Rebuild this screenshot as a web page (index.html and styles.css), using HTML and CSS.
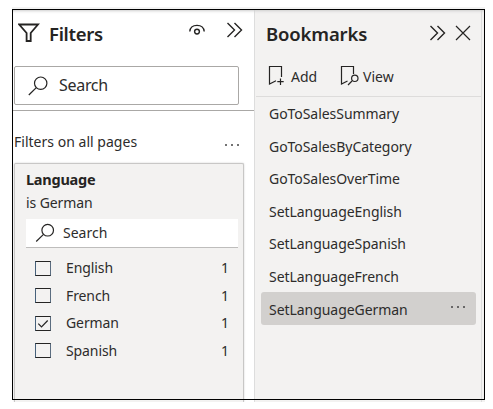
FILE: index.html
```html
<!DOCTYPE html>
<html lang="en">
<head>
<meta charset="utf-8">
<title>Filters and Bookmarks</title>
<link rel="stylesheet" href="styles.css">
</head>
<body>
<main class="window">
  <section class="filters">
    <header class="filters-head">
      <svg class="funnel" width="22" height="20" viewBox="0 0 22 20"><path d="M1.2 1.5H20L12.7 10v8H8.6v-8Z"/></svg>
      <h1>Filters</h1>
      <svg class="eye" width="16" height="12" viewBox="0 0 16 12"><path d="M.8 7.5C1.2 3.4 4 1.4 8 1.4s6.800 2 7.200 6.100"/><circle cx="8" cy="7.600" r="2.400"/></svg>
      <svg class="chev" width="17" height="16" viewBox="0 0 17 16"><path d="M1.500 1l7 7-7 7M8.500 1l7 7-7 7"/></svg>
    </header>
    <div class="search-main">
      <svg width="20" height="20" viewBox="0 0 20 20"><circle cx="12.700" cy="7.200" r="6.200"/><path d="M8.300 11.600L.8 19"/></svg>
      <span>Search</span>
    </div>
    <div class="group-head"><span>Filters on all pages</span><i class="dots"><b></b><b></b><b></b></i></div>
    <div class="card">
      <h2>Language</h2>
      <p>is German</p>
      <div class="search-card">
        <svg width="20" height="20" viewBox="0 0 20 20"><circle cx="12.700" cy="7.200" r="5.800"/><path d="M8.500 11.400L1.200 18.500"/></svg>
        <span>Search</span>
      </div>
      <ul class="values">
        <li><i class="box"></i><span>English</span><em>1</em></li>
        <li><i class="box"></i><span>French</span><em>1</em></li>
        <li><i class="box"><svg width="14" height="13" viewBox="0 0 14 13"><path d="M2.300 6.700l3.200 3.200 6.200-6.400"/></svg></i><span>German</span><em>1</em></li>
        <li><i class="box"></i><span>Spanish</span><em>1</em></li>
      </ul>
    </div>
  </section>
  <section class="bookmarks">
    <header class="marks-head">
      <h1>Bookmarks</h1>
      <svg class="chev" width="17" height="16" viewBox="0 0 17 16"><path d="M1.500 1l7 7-7 7M8.500 1l7 7-7 7"/></svg>
      <svg class="close" width="16" height="16" viewBox="0 0 16 16"><path d="M1 1l14 14M15 1L1 15"/></svg>
    </header>
    <div class="tools">
      <svg width="18" height="21" viewBox="0 0 18 21"><path d="M13.500 12V1.500h-12V19L8 15.700M12.500 13.500v6.500M9.300 16.700h6.400"/></svg>
      <span class="add">Add</span>
      <svg width="19" height="21" viewBox="0 0 19 21"><path d="M13.500 9V1.500h-12V19l6-3M8 20l4-4"/><circle cx="14.800" cy="13.300" r="3.200"/></svg>
      <span class="view">View</span>
    </div>
    <ul class="marks">
      <li><span>GoToSalesSummary</span></li>
      <li><span>GoToSalesByCategory</span></li>
      <li><span>GoToSalesOverTime</span></li>
      <li><span>SetLanguageEnglish</span></li>
      <li><span>SetLanguageSpanish</span></li>
      <li><span>SetLanguageFrench</span></li>
      <li class="selected"><span>SetLanguageGerman</span><i class="dots"><b></b><b></b><b></b></i></li>
    </ul>
  </section>
</main>
</body>
</html>
```
FILE: styles.css
```css
*, *::after { box-sizing: border-box; }
body { margin: 0; background: #fff; color: #2d2c2b; font: 14px/20px "Noto Sans", "Open Sans", sans-serif; overflow: hidden; }
h1, h2, p, ul { margin: 0; padding: 0; }
ul { list-style: none; }
i, em { font-style: normal; }
svg { fill: none; stroke: #252423; stroke-width: 1.2; flex: none; display: block; }
span { white-space: nowrap; }

.window { position: relative; display: flex; width: 473px; height: 395px; margin: 7px 0 0 12px; border-top: 2px solid #f3f3f3; }
.window::after { content: ""; position: absolute; left: 0; top: 0; width: 473px; height: 391px; border: 1px solid #000; box-shadow: inset 0 3px 3px -2px #ccc; }

.filters { display: flex; flex-direction: column; width: 242px; height: 393px; }
.filters-head { display: flex; height: 57px; padding: 14px 0 0 6px; }
h1 { color: #252423; font-size: 18.5px; line-height: 24px; font-weight: 600; }
.filters-head h1 { width: 139px; margin: -1px 0 0 9px; letter-spacing: -.3px; }
.funnel { stroke-width: 1.8; }
.eye { margin: 1px 21px 0 1px; stroke-width: 1.4; }
.chev { stroke-width: 1.4; }
.filters-head .chev { margin-top: -1px; }
.search-main { display: flex; width: 225px; height: 39px; margin-left: 2px; padding: 9px 13px; border: 1px solid #aaa8a6; border-radius: 2px; font-size: 16px; line-height: 19px; }
.search-main span { margin-left: 11px; letter-spacing: -.3px; }
.group-head { display: flex; justify-content: space-between; align-items: center; height: 53px; margin: 5px 0 0 1px; padding: 10px 5px 0 1px; border-top: 1px solid #aaa8a6; }
.group-head span { letter-spacing: .02px; }
.dots { display: flex; gap: 4px; width: 16px; height: 2px; }
.dots b { width: 2px; height: 2px; background: #444; border-radius: 1px; }
.group-head .dots { margin: 5px 8px 0 0; }
.card { flex: 1; width: 230px; margin-left: 2px; padding: 5px 5px 0 10px; background: #f3f2f1; border: 1px solid #c8c7c6; border-bottom: 0; border-radius: 2px 2px 0 0; box-shadow: 0 0 2px #ccc; }
.card h2 { height: 24px; padding-left: 1px; font-size: 14.5px; line-height: 20px; letter-spacing: -.25px; color: #252423; }
.card p { height: 26px; padding-left: 1px; letter-spacing: -.1px; }
.search-card { display: flex; width: 212px; height: 29px; margin-left: 1px; padding: 4px 9px; background: #fff; border-bottom: 1px solid #bebdbc; }
.search-card span { margin-left: 8px; }
.values { padding-top: 6px; }
.values li { display: flex; align-items: center; height: 27.5px; padding: 1px 0 0 10px; }
.box { width: 16px; height: 15px; border: 1px solid #252423; border-left-color: #46617b; border-right-color: #5b6d80; }
.values span { width: 155px; margin-left: 15px; letter-spacing: -.1px; }

.bookmarks { width: 231px; height: 393px; background: linear-gradient(to right, #ddd 1px, transparent 1px 227px, #ddd 227px 228px, transparent 228px), #f3f2f1; }
.marks-head { display: flex; height: 47px; padding: 13px 0 0 12px; }
.marks-head h1 { width: 163px; letter-spacing: -.15px; }
.marks-head .chev { margin-top: 3px; }
.close { margin: 3px 0 0 9px; }
.tools { display: flex; width: 225px; height: 41px; margin-left: 2px; padding: 9px 0 0 12px; border-bottom: 1px solid #dddcdb; }
.add { width: 38px; margin: 2px 11px 0 5px; }
.view { margin: 2px 0 0 4px; }
.marks { padding-left: 7px; }
.marks li { display: flex; align-items: center; justify-content: space-between; width: 215px; height: 32.5px; padding: 2px 9px 0 8px; letter-spacing: -.05px; }
.marks .selected { height: 33px; background: #d2d0ce; border-radius: 3px; }
.selected .dots { margin-bottom: 6px; }
```
